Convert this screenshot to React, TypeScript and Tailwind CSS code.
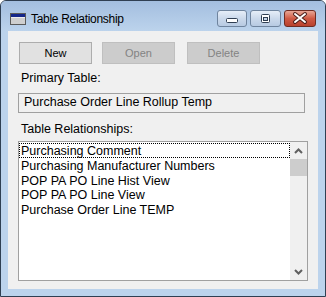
const relationships = ['Purchasing Comment', 'Purchasing Manufacturer Numbers', 'POP PA PO Line Hist View', 'POP PA PO Line View', 'Purchase Order Line TEMP']

function WindowIcon() {
  return (
    <svg width="16" height="12" viewBox="0 0 16 12" className="mt-[12px] shrink-0">
      <rect x="0.5" y="0.5" width="15" height="11" fill="#cfcfcf" stroke="#5a5a5a" />
      <rect x="1" y="1" width="14" height="3" fill="#14268a" />
      <line x1="1" y1="4.5" x2="15" y2="4.5" stroke="#ffffff" strokeOpacity="0.6" />
    </svg>
  )
}

function CaptionButtons() {
  return (
    <div className="ml-auto mt-[9px] flex gap-[3px] h-[17px]">
      <div className="w-[30px] h-[17px] rounded-[3px] border border-[#6f849e] bg-gradient-to-b from-[#e6eef8] via-[#cbd9eb] to-[#b7cae2]">
        <svg width="28" height="15" viewBox="0 0 28 15">
          <rect x="8.5" y="7.5" width="11" height="4" rx="1" fill="#ffffff" stroke="#2f3e52" />
        </svg>
      </div>
      <div className="w-[31px] h-[17px] rounded-[3px] border border-[#6f849e] bg-gradient-to-b from-[#e6eef8] via-[#cbd9eb] to-[#b7cae2]">
        <svg width="29" height="15" viewBox="0 0 29 15">
          <rect x="10.5" y="3.5" width="8" height="8" rx="1" fill="#ffffff" stroke="#2f3e52" />
          <rect x="12.5" y="6.5" width="4" height="3" fill="#c4d4e8" stroke="#2f3e52" />
        </svg>
      </div>
      <div className="w-[32px] h-[17px] rounded-[3px] border border-[#6e2c22] bg-gradient-to-b from-[#e7a797] via-[#cf5a45] to-[#b8412d]">
        <svg width="30" height="15" viewBox="0 0 30 15">
          <path d="M10 3 L20 11 M20 3 L10 11" stroke="#4a1f1a" strokeWidth="4" strokeLinecap="round" />
          <path d="M10 3 L20 11 M20 3 L10 11" stroke="#ffffff" strokeWidth="2" strokeLinecap="round" />
        </svg>
      </div>
    </div>
  )
}

function Chevron({ down }: { down?: boolean }) {
  return (
    <svg width="9" height="6" viewBox="0 0 9 6">
      <polyline points={down ? '1,1 4.5,4.5 8,1' : '1,5 4.5,1.5 8,5'} fill="none" stroke="#606060" strokeWidth="2" />
    </svg>
  )
}

export default function App() {
  return (
    <div className="w-[326px] h-[297px] flex flex-col rounded-t-[6px] border border-[#2f3f52] bg-[#bcd3ec] font-['Liberation_Sans',Arial,sans-serif] text-black">
      <div className="h-[30px] shrink-0 flex pl-[9px] pr-[9px] rounded-t-[5px] bg-gradient-to-b from-[#a3bedf] to-[#bcd3ec]">
        <WindowIcon />
        <span className="ml-[5px] mt-[11px] h-[15px] text-[12px] leading-[15px] tracking-[-0.3px]">Table Relationship</span>
        <CaptionButtons />
      </div>

      <div className="flex-1 mx-[7px] mb-[7px] bg-[#f0f0f0] flex flex-col">
        <div className="flex mt-[11px] ml-[11px] text-[11px]">
          <div className="w-[73px] h-[22px] flex items-center justify-center border border-[#adadad] bg-[#e1e1e1]">New</div>
          <div className="ml-[10px] w-[73px] h-[22px] flex items-center justify-center border border-[#bfbfbf] bg-[#cccccc] text-[#838383]">Open</div>
          <div className="ml-[12px] w-[73px] h-[22px] flex items-center justify-center border border-[#bfbfbf] bg-[#cccccc] text-[#838383]">Delete</div>
        </div>

        <div className="mt-[7px] ml-[13px] text-[12.5px] leading-[15px]">Primary Table:</div>
        <div className="mt-[7px] ml-[10px] w-[287px] h-[20px] border border-[#a0a0a0] bg-[#f0f0f0] pl-[5px] pt-[1px] text-[12.5px] leading-[15px]">Purchase Order Line Rollup Temp</div>

        <div className="mt-[9px] ml-[13px] text-[12.5px] leading-[15px]">Table Relationships:</div>
        <div className="mt-[4px] ml-[10px] w-[290px] h-[140px] border border-[#a0a0a0] bg-white flex">
          <div className="flex-1 pt-[1px] text-[12.5px]">
            {relationships.map((item, idx) => (
              <div key={idx} className={'h-[14.75px] leading-[13px] pl-[1px] whitespace-nowrap border ' + (idx === 0 ? 'border-dotted border-black' : 'border-transparent')}>
                <span className="block h-[12.75px] leading-[14.75px]">{item}</span>
              </div>
            ))}
          </div>
          <div className="w-[17px] bg-[#f0f0f0] flex flex-col">
            <div className="h-[17px] flex items-center justify-center">
              <Chevron />
            </div>
            <div className="h-[17px] bg-[#cdcdcd]"></div>
            <div className="flex-1"></div>
            <div className="h-[17px] flex items-center justify-center">
              <Chevron down />
            </div>
          </div>
        </div>
      </div>
    </div>
  )
}
